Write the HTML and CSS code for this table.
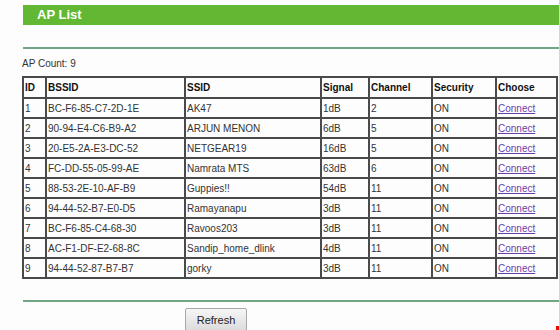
FILE: index.html
```html
<!DOCTYPE html>
<html>
<head>
<meta charset="utf-8">
<link rel="stylesheet" href="styles.css">
</head>
<body>
<div class="page">
  <div class="title-bar">AP List</div>
  <div class="rule rule-top"></div>
  <div class="count">AP Count: 9</div>
  <table class="ap-table">
    <colgroup>
      <col class="c-id"><col class="c-bssid"><col class="c-ssid"><col class="c-signal"><col class="c-channel"><col class="c-sec"><col class="c-choose">
    </colgroup>
    <thead>
      <tr><th>ID</th><th>BSSID</th><th>SSID</th><th>Signal</th><th>Channel</th><th>Security</th><th>Choose</th></tr>
    </thead>
    <tbody>
      <tr><td>1</td><td>BC-F6-85-C7-2D-1E</td><td>AK47</td><td>1dB</td><td>2</td><td>ON</td><td><a href="#">Connect</a></td></tr>
      <tr><td>2</td><td>90-94-E4-C6-B9-A2</td><td>ARJUN MENON</td><td>6dB</td><td>5</td><td>ON</td><td><a href="#">Connect</a></td></tr>
      <tr><td>3</td><td>20-E5-2A-E3-DC-52</td><td>NETGEAR19</td><td>16dB</td><td>5</td><td>ON</td><td><a href="#">Connect</a></td></tr>
      <tr><td>4</td><td>FC-DD-55-05-99-AE</td><td>Namrata MTS</td><td>63dB</td><td>6</td><td>ON</td><td><a href="#">Connect</a></td></tr>
      <tr><td>5</td><td>88-53-2E-10-AF-B9</td><td>Guppies!!</td><td>54dB</td><td>11</td><td>ON</td><td><a href="#">Connect</a></td></tr>
      <tr><td>6</td><td>94-44-52-B7-E0-D5</td><td>Ramayanapu</td><td>3dB</td><td>11</td><td>ON</td><td><a href="#">Connect</a></td></tr>
      <tr><td>7</td><td>BC-F6-85-C4-68-30</td><td>Ravoos203</td><td>3dB</td><td>11</td><td>ON</td><td><a href="#">Connect</a></td></tr>
      <tr><td>8</td><td>AC-F1-DF-E2-68-8C</td><td>Sandip_home_dlink</td><td>4dB</td><td>11</td><td>ON</td><td><a href="#">Connect</a></td></tr>
      <tr><td>9</td><td>94-44-52-87-B7-B7</td><td>gorky</td><td>3dB</td><td>11</td><td>ON</td><td><a href="#">Connect</a></td></tr>
    </tbody>
  </table>
  <div class="rule rule-bottom"></div>
  <div class="actions"><button class="btn">Refresh</button></div>
</div>
<div class="corner-mark"></div>
</body>
</html>
```
FILE: styles.css
```css
html, body {
  margin: 0;
  padding: 0;
  background: #fdfdfd;
  overflow: hidden;
}
body {
  width: 559px;
  height: 330px;
  font-family: "Liberation Sans", Arial, sans-serif;
  color: #333;
  position: relative;
}
.page {
  padding: 5px 0 0 22px;
}
.title-bar {
  margin-left: 1px;
  height: 20px;
  line-height: 20px;
  background: #62b832;
  color: #fff;
  font-weight: bold;
  font-size: 13px;
  padding-left: 14px;
}
.rule {
  margin-left: 1px;
  height: 2px;
  background: #72a585;
}
.rule-top {
  margin-top: 22px;
}
.count {
  font-size: 10px;
  margin-top: 9px;
  height: 18px;
  line-height: 12px;
}
.ap-table {
  border-collapse: collapse;
  table-layout: fixed;
  width: 534px;
  border: 2px solid #4a4a4a;
  font-size: 10px;
}
.c-id { width: 23px; }
.c-bssid { width: 139px; }
.c-ssid { width: 136px; }
.c-signal { width: 48px; }
.c-channel { width: 63px; }
.c-sec { width: 64px; }
.c-choose { width: 61px; }
.ap-table th, .ap-table td {
  border: 2px solid #4a4a4a;
  text-align: left;
  padding: 0 0 0 1px;
  height: 18px;
  white-space: nowrap;
  overflow: hidden;
}
.ap-table th {
  font-weight: bold;
  color: #111;
  height: 19px;
}
.ap-table a {
  color: #6a3fa8;
  text-decoration: underline;
}
.rule-bottom {
  margin-top: 21px;
}
.actions {
  padding: 6px 0 0 163px;
}
.btn {
  width: 62px;
  height: 23px;
  font-family: "Liberation Sans", Arial, sans-serif;
  font-size: 11px;
  color: #222;
  background: linear-gradient(#f6f6f6, #dcdcdc);
  border: 1px solid #a9a9a9;
  border-radius: 2px;
  padding: 0;
}
.corner-mark {
  position: absolute;
  right: 0;
  bottom: 0;
  width: 3px;
  height: 4px;
  background: #f00;
}
```
